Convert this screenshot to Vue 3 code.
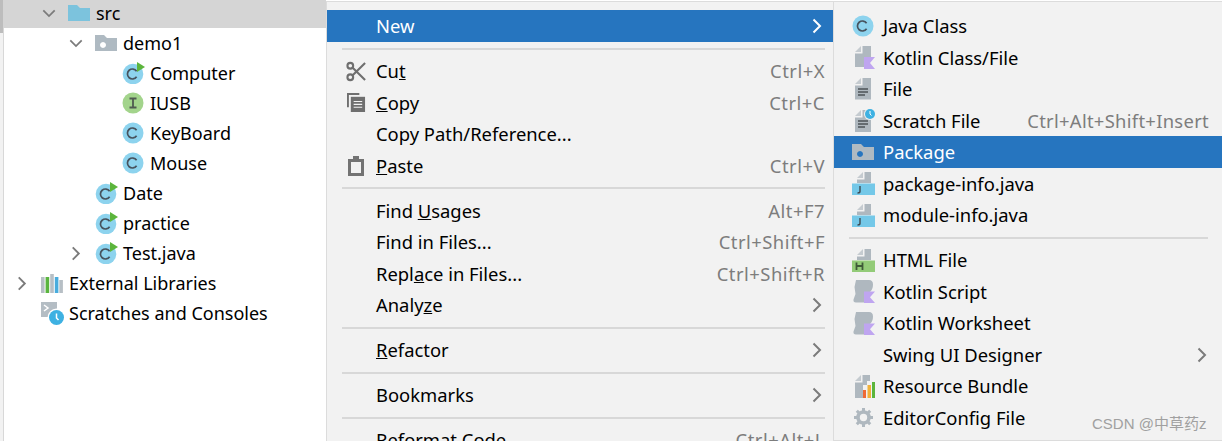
<script setup>
const tree = [
  { d: 1, chev: 'down', icon: 'folder', text: 'src', sel: true },
  { d: 2, chev: 'down', icon: 'pkg', text: 'demo1' },
  { d: 3, icon: 'classrun', text: 'Computer' },
  { d: 3, icon: 'iface', text: 'IUSB' },
  { d: 3, icon: 'class', text: 'KeyBoard' },
  { d: 3, icon: 'class', text: 'Mouse' },
  { d: 2, icon: 'classrun', text: 'Date' },
  { d: 2, icon: 'classrun', text: 'practice' },
  { d: 2, chev: 'right', icon: 'classrun', text: 'Test.java' },
  { d: 0, chev: 'right', icon: 'libs', text: 'External Libraries' },
  { d: 0, icon: 'scratches', text: 'Scratches and Consoles' }
]
const menu = [
  { a: 'New', arrow: true, active: true },
  { sep: true },
  { icon: 'cut', a: 'Cu', u: 't', key: 'Ctrl+X' },
  { icon: 'copy', u: 'C', b: 'opy', key: 'Ctrl+C' },
  { a: 'Copy Path/Reference...' },
  { icon: 'paste', u: 'P', b: 'aste', key: 'Ctrl+V' },
  { sep: true },
  { a: 'Find ', u: 'U', b: 'sages', key: 'Alt+F7' },
  { a: 'Find in Files...', key: 'Ctrl+Shift+F' },
  { a: 'Repl', u: 'a', b: 'ce in Files...', key: 'Ctrl+Shift+R' },
  { a: 'Analy', u: 'z', b: 'e', arrow: true },
  { sep: true },
  { u: 'R', b: 'efactor', arrow: true },
  { sep: true },
  { a: 'Bookmarks', arrow: true },
  { sep: true },
  { a: 'Reformat Code', key: 'Ctrl+Alt+L' }
]
const sub = [
  { icon: 'class', a: 'Java Class' },
  { icon: 'kotlinfile', a: 'Kotlin Class/File' },
  { icon: 'file', a: 'File' },
  { icon: 'scratchfile', a: 'Scratch File', key: 'Ctrl+Alt+Shift+Insert' },
  { icon: 'pkg', a: 'Package', active: true },
  { icon: 'javafile', a: 'package-info.java' },
  { icon: 'javafile', a: 'module-info.java' },
  { sep: true },
  { icon: 'html', a: 'HTML File' },
  { icon: 'kotlinscript', a: 'Kotlin Script' },
  { icon: 'kotlinscript', a: 'Kotlin Worksheet' },
  { a: 'Swing UI Designer', arrow: true },
  { icon: 'bundle', a: 'Resource Bundle' },
  { icon: 'gear', a: 'EditorConfig File' }
]
</script>

<template>
  <div class="page">
    <svg class="sprite" xmlns="http://www.w3.org/2000/svg">
      <symbol id="i-folder" viewBox="0 0 22 16"><path d="M0 0h9l3 3h10v13H0z" fill="#7cc3dd"/></symbol>
      <symbol id="i-pkg" viewBox="0 0 22 16"><path fill-rule="evenodd" d="M0 0h9l3 3h10v13H0zM8 7a3 3 0 1 0 0.01 0z" fill="#afbac2"/></symbol>
      <symbol id="i-class" viewBox="0 0 22 22"><circle cx="11" cy="11" r="10.500" fill="#8dd3ee"/><path d="M14.600 8.200A5 5 0 1 0 14.600 13.800" fill="none" stroke="#47535e" stroke-width="1.700"/></symbol>
      <symbol id="i-classrun" viewBox="0 0 24 22"><circle cx="11" cy="12" r="10.300" fill="#8dd3ee"/><path d="M14.600 9.200A5 5 0 1 0 14.600 14.800" fill="none" stroke="#47535e" stroke-width="1.700"/><path d="M15 0l8 5-8 5z" fill="#5cb53c"/></symbol>
      <symbol id="i-iface" viewBox="0 0 22 22"><circle cx="11" cy="11" r="10.500" fill="#a3d48c"/><path d="M7.500 6.500h7M7.500 15.500h7M11 6.500v9" fill="none" stroke="#4f5a50" stroke-width="1.800"/></symbol>
      <symbol id="i-libs" viewBox="0 0 22 19"><path d="M0 3h3.600v16H0zM18.300 6h3.600v13h-3.600z" fill="#b7bfc5"/><path d="M4.600 3h3.600v16H4.600z" fill="#5bb53f"/><path d="M9.200 0h3.600v19H9.200z" fill="#b7bfc5"/><path d="M13.800 3h3.600v16h-3.600z" fill="#49acdd"/></symbol>
      <symbol id="i-scratches" viewBox="0 0 23 23"><path d="M0 0h16v15H0z" fill="#b4bdc4"/><path d="M3 3l4 3-4 3" fill="none" stroke="#fff" stroke-width="1.500"/><circle cx="15.500" cy="15.500" r="9" fill="#fff"/><circle cx="15.500" cy="15.500" r="7.500" fill="#3eb1e2"/><path d="M15.500 11.500v4.500l2 2" fill="none" stroke="#fff" stroke-width="1.500"/></symbol>
      <symbol id="i-cut" viewBox="0 0 22 22"><g fill="none" stroke="#6f6f6f" stroke-width="2.200"><circle cx="4.500" cy="5" r="3"/><circle cx="4.500" cy="17" r="3"/><path d="M7 7l13 13M7 15L20 2"/></g></symbol>
      <symbol id="i-copy" viewBox="0 0 20 20"><path d="M0 0h13v2H2v13H0z" fill="#6f6f6f"/><path d="M4 4h15v16H4z" fill="#6f6f6f"/><path d="M7 9h9M7 12h9M7 15h9" stroke="#f2f2f2" stroke-width="1.200"/></symbol>
      <symbol id="i-paste" viewBox="0 0 16 20"><path d="M0 3h5V0h6v3h5v17H0z" fill="#737373"/><path d="M3 6h10v11H3z" fill="#f2f2f2"/></symbol>
      <symbol id="i-kotlinfile" viewBox="0 0 23 23"><path d="M3 6l6-6v6z" fill="#c5cbd0"/><path d="M10.500 0H19v11h-7v10H3V7.500h7.500z" fill="#afb8bf"/><path d="M12 11h11l-5 6 5 6H12z" fill="#bfa5f0"/></symbol>
      <symbol id="i-file" viewBox="0 0 23 23"><path d="M3 6l6-6v6z" fill="#c5cbd0"/><path d="M10.500 0H19v21.500H3V7.500h7.500z" fill="#afb8bf"/><path d="M6 11h10M6 14h10M6 17h7" stroke="#4e5358" stroke-width="1.400"/></symbol>
      <symbol id="i-scratchfile" viewBox="0 0 23 23"><path d="M3 7l6-6v6z" fill="#c5cbd0"/><path d="M10.500 1H19v22H3V8.500h7.500z" fill="#afb8bf"/><path d="M6 12h10M6 15h10M6 18h7" stroke="#4e5358" stroke-width="1.400"/><circle cx="18" cy="5" r="6" fill="#f2f2f2"/><circle cx="18" cy="5" r="5" fill="#3eb1e2"/><path d="M18 2v3l1.500 1.500" fill="none" stroke="#fff" stroke-width="1"/></symbol>
      <symbol id="i-javafile" viewBox="0 0 23 23"><path d="M5 6l6-6v6z" fill="#c5cbd0"/><path d="M12.500 0H19v11H5V7.500h7.500z" fill="#afb8bf"/><path d="M0 11.500h23V23H0z" fill="#74c8e8"/><path d="M8 14v5.500q0 1.500-2.500 1.500" fill="none" stroke="#3d4a52" stroke-width="1.400"/></symbol>
      <symbol id="i-html" viewBox="0 0 23 23"><path d="M5 6l6-6v6z" fill="#c5cbd0"/><path d="M12.500 0H19v11H5V7.500h7.500z" fill="#afb8bf"/><path d="M0 11.500h23V23H0z" fill="#93cb78"/><path d="M4.500 13.500v7.500M10.500 13.500v7.500M4.500 17h6" fill="none" stroke="#3f5a38" stroke-width="1.800"/></symbol>
      <symbol id="i-kotlinscript" viewBox="0 0 23 23"><path d="M4 0h13q4 0 4 4.500T18 12h-6v10.500H4q-3 0-2.500-3L3.500 14 2.500 7z" fill="#afb8bf"/><path d="M12 11.500h11l-5 5.750 5 5.750H12z" fill="#bfa5f0"/></symbol>
      <symbol id="i-bundle" viewBox="0 0 23 23"><path d="M3 6l6-6v6z" fill="#c5cbd0"/><path d="M10.500 0H18v6h-3v4h-4v13H3V7.500h7.500z" fill="#afb8bf"/><path d="M11 15h3v8h-3z" fill="#ef6a35"/><path d="M15.500 10h3.500v13h-3.500z" fill="#f2b13a"/><path d="M20 7h3v16h-3z" fill="#5cb53c"/></symbol>
      <symbol id="i-gear" viewBox="0 0 23 23"><g fill="none" stroke="#afb8bf"><circle cx="11.500" cy="11.500" r="5.500" stroke-width="3.600"/><path d="M11.500 2v19M2 11.500h19M4.800 4.800l13.400 13.400M18.200 4.800L4.800 18.200" stroke-width="3" stroke-dasharray="3 13"/></g></symbol>
      <symbol id="i-right" viewBox="0 0 10 16"><path d="M1.500 1.500L8 8l-6.500 6.500" fill="none" stroke="currentColor" stroke-width="2"/></symbol>
      <symbol id="i-down" viewBox="0 0 16 10"><path d="M1.500 1.500L8 8l6.500-6.500" fill="none" stroke="currentColor" stroke-width="2"/></symbol>
    </svg>

    <div class="gutter"><div class="thumb"></div></div>

    <div class="tree">
      <div
        v-for="row in tree"
        :key="row.text"
        class="tree-row"
        :class="{ selected: row.sel }"
        :style="{ paddingLeft: 11 + row.d * 27 + 'px' }"
      >
        <span class="twist">
          <svg v-if="row.chev === 'down'" class="chev-down"><use href="#i-down" /></svg>
          <svg v-else-if="row.chev === 'right'" class="chev-right"><use href="#i-right" /></svg>
        </span>
        <svg class="tree-icon" :class="'ic-' + row.icon"><use :href="'#i-' + row.icon" /></svg>
        <span class="tree-text">{{ row.text }}</span>
      </div>
    </div>

    <div class="menu main">
      <template v-for="(m, i) in menu" :key="i">
        <div v-if="m.sep" class="sep"></div>
        <div v-else class="item" :class="{ active: m.active }">
          <span class="slot">
            <svg v-if="m.icon" class="menu-icon" :class="'ic-' + m.icon"><use :href="'#i-' + m.icon" /></svg>
          </span>
          <span class="label">{{ m.a }}<u v-if="m.u">{{ m.u }}</u>{{ m.b }}</span>
          <span v-if="m.key" class="key">{{ m.key }}</span>
          <svg v-if="m.arrow" class="arrow"><use href="#i-right" /></svg>
        </div>
      </template>
    </div>

    <div class="menu submenu">
      <template v-for="(m, i) in sub" :key="i">
        <div v-if="m.sep" class="sep"></div>
        <div v-else class="item" :class="{ active: m.active }">
          <span class="slot">
            <svg v-if="m.icon" class="menu-icon" :class="'ic-' + m.icon"><use :href="'#i-' + m.icon" /></svg>
          </span>
          <span class="label">{{ m.a }}</span>
          <span v-if="m.key" class="key">{{ m.key }}</span>
          <svg v-if="m.arrow" class="arrow"><use href="#i-right" /></svg>
        </div>
      </template>
    </div>

    <div class="watermark">CSDN @中草药z</div>
  </div>
</template>

<style>
html, body { margin: 0; background: #fff; }
</style>

<style scoped>
.page {
  position: relative;
  display: flex;
  align-items: flex-start;
  width: 1222px;
  height: 441px;
  overflow: hidden;
  font-family: "Noto Sans", "Noto Sans CJK SC", sans-serif;
  font-size: 18.4px;
  color: #000;
}
.sprite { display: none; }

.gutter {
  width: 3px;
  height: 441px;
  flex: none;
  background: #f2f2f2;
}
.thumb { height: 33px; background: #bdbdbd; }

.tree {
  width: 322px;
  height: 443px;
  margin-top: -2px;
  flex: none;
  border-left: 1px solid #d8d8d8;
  background: #fff;
}
.tree-row {
  display: flex;
  align-items: center;
  height: 30px;
  margin-left: -1px;
  font-size: 18px;
}
.tree-row.selected { background: #d5d5d5; }
.twist {
  width: 27px;
  height: 22px;
  display: flex;
  align-items: center;
  flex: none;
  color: #7b7b7b;
}
.chev-down { width: 14px; height: 9px; margin-left: 1px; }
.chev-right { width: 10px; height: 15px; margin-left: 3px; }
.tree-icon { width: 22px; height: 22px; flex: none; }
.tree-icon.ic-folder, .tree-icon.ic-pkg { height: 16px; }
.tree-icon.ic-classrun { width: 24px; }
.tree-icon.ic-libs { height: 19px; }
.tree-icon.ic-scratches { width: 23px; height: 23px; }
.tree-text { margin-left: 6px; white-space: nowrap; }
.ic-classrun + .tree-text { margin-left: 4px; }
.ic-scratches + .tree-text { margin-left: 5px; }

.menu {
  background: #f2f2f2;
  box-sizing: border-box;
  margin-top: 1px;
  padding-top: 8.25px;
  flex: none;
  border-top: 1px solid #dcdcdc;
  border-left: 1px solid #dcdcdc;
}
.main { width: 507px; height: 440px; }
.submenu {
  width: 389px;
  height: 440px;
  border-bottom: 1px solid #dcdcdc;
}
.item {
  display: flex;
  align-items: center;
  height: 31.5px;
  white-space: nowrap;
}
.item.active { background: #2675bf; color: #fff; }
.slot {
  width: 49px;
  flex: none;
  display: flex;
  justify-content: center;
  padding-left: 9px;
  box-sizing: border-box;
}
.submenu .slot {
  justify-content: flex-start;
  padding-left: 18px;
}
.menu-icon { width: 23px; height: 23px; flex: none; }
.menu-icon.ic-class { width: 22px; height: 22px; }
.menu-icon.ic-pkg { width: 22px; height: 16px; }
.menu-icon.ic-cut { width: 21px; height: 21px; }
.menu-icon.ic-copy { width: 19px; height: 19px; }
.menu-icon.ic-paste { width: 16px; height: 20px; }
.label { flex: 1; margin-bottom: 1px; }
.key {
  color: #7d7d7d;
  margin: 0 8px 1px 0;
  letter-spacing: 0.5px;
}
.submenu .key { margin-right: 13px; letter-spacing: 0.3px; }
.arrow {
  width: 10px;
  height: 16px;
  margin-right: 11px;
  flex: none;
  color: #7b7b7b;
}
.active .arrow { color: #fff; }
.submenu .arrow { margin-right: 15px; }
.sep {
  height: 2px;
  margin: 5.75px 8px 5.75px 15px;
  background: #d8d8d8;
}
.submenu .sep { margin-right: 14px; }

.watermark {
  position: absolute;
  left: 1092px;
  top: 414px;
  font-family: "Liberation Sans", "Noto Sans CJK SC", sans-serif;
  font-size: 15px;
  line-height: 20px;
  color: #a0a0a0;
  white-space: nowrap;
}
</style>
